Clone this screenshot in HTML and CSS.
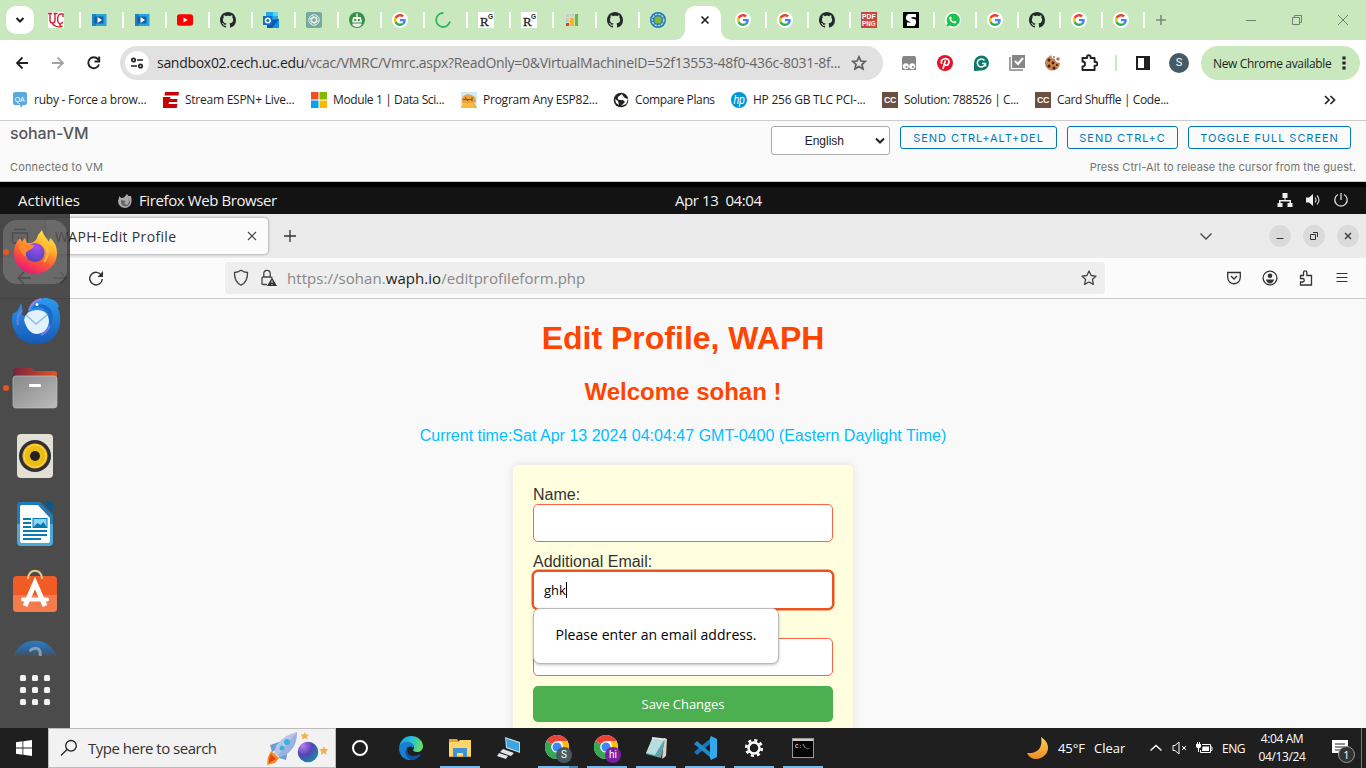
FILE: index.html
```html
<!DOCTYPE html>
<html lang="en">
<head>
<meta charset="utf-8">
<title>sohan-VM</title>
<link rel="stylesheet" href="styles.css">
</head>
<body>
<svg class="defs" width="0" height="0" aria-hidden="true">
<defs>
<linearGradient id="ffFlame" x1=".8" y1="0" x2=".3" y2="1"><stop offset="0" stop-color="#fff04a"/><stop offset=".35" stop-color="#ffb02e"/><stop offset=".65" stop-color="#ff5a36"/><stop offset="1" stop-color="#e9137c"/></linearGradient>
<radialGradient id="ffGlobe" cx=".6" cy=".2" r=".9"><stop offset="0" stop-color="#a54ff0"/><stop offset="1" stop-color="#4544b8"/></radialGradient>
<linearGradient id="bird" x1=".5" y1="0" x2=".5" y2="1"><stop offset="0" stop-color="#2b9aef"/><stop offset="1" stop-color="#1559b4"/></linearGradient>
<linearGradient id="folderBack"><stop offset="0" stop-color="#762341"/><stop offset="1" stop-color="#e95420"/></linearGradient>
<linearGradient id="grey" x1="0" y1="0" x2="1" y2="1"><stop offset="0" stop-color="#888"/><stop offset="1" stop-color="#bbb"/></linearGradient>
<linearGradient id="edgeG" x1="0" y1=".3" x2="1" y2=".5"><stop offset="0" stop-color="#1b9de2"/><stop offset=".5" stop-color="#2bc0d8"/><stop offset="1" stop-color="#6ade5c"/></linearGradient>
<linearGradient id="moonG" x1="0" y1="0" x2="0" y2="1"><stop offset="0" stop-color="#ffd35a"/><stop offset="1" stop-color="#f08a24"/></linearGradient>
<linearGradient id="helpG" x1="0" y1="0" x2="0" y2="1"><stop offset="0" stop-color="#2a7fc4"/><stop offset=".5" stop-color="#2b68a0"/><stop offset="1" stop-color="#4a5056"/></linearGradient>
<radialGradient id="planetG" cx=".25" cy=".2" r=".9"><stop offset="0" stop-color="#bb7cf0"/><stop offset=".5" stop-color="#5046b4"/><stop offset="1" stop-color="#158ea6"/></radialGradient>
<symbol id="github" viewBox="0 0 16 16"><path fill="#24292f" d="M8 0C3.58 0 0 3.58 0 8c0 3.54 2.29 6.53 5.47 7.59.4.07.55-.17.55-.38 0-.19-.01-.82-.01-1.49-2.01.37-2.53-.49-2.69-.94-.09-.23-.48-.94-.82-1.13-.28-.15-.68-.52-.01-.53.63-.01 1.08.58 1.23.82.72 1.21 1.87.87 2.33.66.07-.52.28-.87.51-1.07-1.78-.2-3.64-.89-3.64-3.95 0-.87.31-1.59.82-2.15-.08-.2-.36-1.02.08-2.12 0 0 .67-.21 2.2.82.64-.18 1.32-.27 2-.27s1.36.09 2 .27c1.53-1.04 2.2-.82 2.2-.82.44 1.1.16 1.92.08 2.12.51.56.82 1.27.82 2.15 0 3.07-1.87 3.75-3.65 3.95.29.25.54.73.54 1.48 0 1.07-.01 1.93-.01 2.2 0 .21.15.46.55.38A8.01 8.01 0 0 0 16 8c0-4.42-3.58-8-8-8z"/></symbol>
<symbol id="google" viewBox="0 0 64 64"><circle cx="32" cy="32" r="32" fill="#fff"/><g transform="translate(8 8)"><path fill="#EA4335" d="M24 9.5c3.54 0 6.71 1.22 9.21 3.6l6.85-6.85C35.9 2.38 30.47 0 24 0 14.62 0 6.51 5.38 2.56 13.22l7.98 6.19C12.43 13.72 17.74 9.5 24 9.5z"/><path fill="#4285F4" d="M46.98 24.55c0-1.57-.15-3.09-.38-4.55H24v9.02h12.94c-.58 2.96-2.26 5.48-4.78 7.18l7.73 6c4.51-4.18 7.09-10.36 7.09-17.65z"/><path fill="#FBBC05" d="M10.53 28.59c-.48-1.45-.76-2.99-.76-4.59s.27-3.14.76-4.59l-7.98-6.19C.92 16.46 0 20.12 0 24c0 3.88.92 7.54 2.56 10.78l7.97-6.19z"/><path fill="#34A853" d="M24 48c6.48 0 11.93-2.13 15.89-5.81l-7.73-6c-2.15 1.45-4.92 2.3-8.16 2.3-6.26 0-11.57-4.22-13.47-9.91l-7.98 6.19C6.51 42.62 14.62 48 24 48z"/></g></symbol>
<symbol id="video" viewBox="0 0 16 16"><path fill="#1b82c4" d="M1 2h5v12H1z"/><path fill="#2aa5dc" d="M5 2h10.500v12H5z"/><path fill="#0f5fa8" d="M3.500 4.500h9v7h-9z"/><path fill="#fff" d="M6.500 5l4.500 3-4.500 3z"/></symbol>
<symbol id="rgate" viewBox="0 0 16 16"><path fill="#fff" d="M0 0h16v16H0z"/><text x="2" y="14" font-size="13" font-family="Liberation Serif, serif" fill="#222" stroke="#222" stroke-width=".3">R</text><text x="10" y="7" font-size="6.500" font-weight="700" font-family="Liberation Sans, sans-serif" fill="#222">G</text></symbol>
<symbol id="chrome" viewBox="0 0 26 26"><circle cx="12" cy="12" r="12" fill="#fff"/><path fill="#ea4335" d="M12 12L1.600 6A12 12 0 0 1 22.400 6H12z"/><path fill="#34a853" d="M1.600 6A12 12 0 0 0 12 24l5-9z"/><path fill="#fbbc04" d="M22.400 6A12 12 0 0 1 12 24l6-10-1-8z"/><circle cx="12" cy="12" r="5.800" fill="#fff"/><circle cx="12" cy="12" r="4.500" fill="#4285f4"/></symbol>
<symbol id="cc" viewBox="0 0 16 16"><path fill="#6b503f" d="M0 0h16v16H0z"/><text x="8" y="11" text-anchor="middle" font-size="8.500" font-weight="700" font-family="Liberation Sans, sans-serif" fill="#fff" textLength="12" lengthAdjust="spacingAndGlyphs">CC</text></symbol>
<symbol id="firefox" viewBox="0 0 44 44"><path fill="url(#ffFlame)" d="M22 43.500C10 43.500 1 35 1 23.500 1 16 4 11 7 8l2 4 3-4 2 5h4c4-1 6-4 7-8l4-5c1 5 5 8 7 12l1-4c5 4 7 9 7 15 0 12-10 20.500-22 20.500z"/><circle cx="22" cy="22.500" r="9.500" fill="url(#ffGlobe)"/><path fill="#ff8a2c" d="M5 17c4-5 8-3 16-2 1 3-4 4-6 6-2 1-3 3-2 6-4-2-5-6-8-10z"/><path d="M30 12q9 10 1 20" fill="none" stroke="#ffc13b" stroke-width="2"/></symbol>
</defs>
</svg>

<header class="tabstrip">
  <div class="tab-search"><svg width="10" height="10" viewBox="0 0 10 10"><path d="M1.500 3l3.500 3.500L8.500 3" fill="none" stroke="#1f1f1f" stroke-width="2"/></svg></div>
  <div class="tabs">
    <div class="tab"><svg viewBox="0 0 16 16"><path fill="#fff" d="M0 0h16v16H0z"/><path d="M0 1.500h4M2 1.500V8c0 4 5 4 5 0V1.500M5.500 1.500h4M15 5V2h-1.500C9 1 8 12 12.500 12l2.500-2M14.500 14C10 16 6 14 4 11M12 12v3" fill="none" stroke="#d8202f" stroke-width="1.400"/></svg></div>
    <div class="tab"><svg><use href="#video"/></svg></div>
    <div class="tab"><svg><use href="#video"/></svg></div>
    <div class="tab"><svg viewBox="0 0 16 16"><rect y="2.300" width="16" height="11.400" rx="2.500" fill="red"/><path fill="#fff" d="M6.500 5.500l4.200 2.500-4.200 2.500z"/></svg></div>
    <div class="tab"><svg><use href="#github"/></svg></div>
    <div class="tab"><svg viewBox="0 0 16 16"><path fill="#28a8ea" d="M3 0h12v7H3z"/><path fill="#1490df" d="M4 7h12v9H4z"/><path fill="#50d9ff" d="M10 0h5v4h-5z"/><path fill="#0a58a8" d="M4 9l12-2-7 9H4z"/><path fill="#0f6fc6" d="M0 4h9.500v9H0z"/><circle cx="4.800" cy="8.500" r="2.300" fill="none" stroke="#fff" stroke-width="1.500"/></svg></div>
    <div class="tab"><svg viewBox="0 0 16 16"><rect width="16" height="16" rx="2" fill="#75a99c"/><g fill="none" stroke="#e8f3ef" stroke-width=".9"><circle cx="8" cy="8" r="5.300"/><path id="knot" d="M6 3.500l4.200 2.500v4.500"/><use href="#knot" transform="rotate(60 8 8)"/><use href="#knot" transform="rotate(120 8 8)"/><use href="#knot" transform="rotate(180 8 8)"/><use href="#knot" transform="rotate(240 8 8)"/><use href="#knot" transform="rotate(300 8 8)"/></g></svg></div>
    <div class="tab"><svg viewBox="0 0 16 16"><circle cx="8" cy="8" r="8" fill="#3b8e4c"/><path fill="#f3f5e8" d="M7.300 1.500h1.400V5h3l1 3v2.500H3.300V8l1-3h3zM3.500 11.500h9v1.500c-2 2.500-7 2.500-9 0z"/><path fill="#3b8e4c" d="M5.300 7h1.900v2H5.300zM8.900 7h1.900v2H8.900z"/></svg></div>
    <div class="tab"><svg><use href="#google"/></svg></div>
    <div class="tab"><svg viewBox="0 0 16 16"><path d="M8.500 1A7 7 0 1 0 15 9.500" fill="none" stroke="#34b455" stroke-width="1.800"/></svg></div>
    <div class="tab"><svg><use href="#rgate"/></svg></div>
    <div class="tab"><svg><use href="#rgate"/></svg></div>
    <div class="tab"><svg viewBox="0 0 16 16"><path fill="#c9c9c9" d="M2 2h3v3H2zM6 2h4v2.500H6zM2 6h3v4H2z"/><path fill="#dd4038" d="M2 11h3v3H2z"/><path fill="#f5b52a" d="M6 6h4v8H6z"/><path fill="#67b54b" d="M11 2h3v12h-3z"/></svg></div>
    <div class="tab"><svg><use href="#github"/></svg></div>
    <div class="tab"><svg viewBox="0 0 16 16"><circle cx="8" cy="8" r="8" fill="#2675ad"/><circle cx="8" cy="8" r="5.700" fill="none" stroke="#9ad4ee" stroke-width="1.600" stroke-dasharray="2.500 .8"/><rect x="4.500" y="4.500" width="7" height="7" rx="2.500" fill="#82b93c"/></svg></div>
  </div>
  <div class="tab-active"><svg width="10" height="10" viewBox="0 0 10 10"><path d="M1.500 1.500l7 7m0-7l-7 7" stroke="#222" stroke-width="1.700"/></svg></div>
  <div class="tabs tabs-after">
    <div class="tab"><svg><use href="#google"/></svg></div>
    <div class="tab"><svg><use href="#google"/></svg></div>
    <div class="tab"><svg><use href="#github"/></svg></div>
    <div class="tab"><svg viewBox="0 0 16 16"><path fill="#cf4539" d="M0 0h16v16H0z"/><g fill="#fff" font-family="Liberation Sans, sans-serif" font-weight="700" font-size="7.500"><text x="1" y="7.300" textLength="13.500" lengthAdjust="spacingAndGlyphs">PDF</text><text x="1" y="14.300" textLength="13.500" lengthAdjust="spacingAndGlyphs">PNG</text></g></svg></div>
    <div class="tab"><svg viewBox="0 0 16 16"><path d="M0 0h16v16H0z"/><path fill="#fff" d="M5 2h8v3.500L10 5 7.500 6l5 1.500q1.500 3-1 6.500H4v-3.500h4L3.500 8Q1.500 5 5 2z"/></svg></div>
    <div class="tab"><svg viewBox="0 0 16 16"><circle cx="8" cy="8" r="8" fill="#fff"/><path fill="#1bc34c" d="M1.500 14.500l1-3.500A6.500 6.500 0 1 1 5 13.600z"/><path fill="#fff" d="M5.700 4.300l1 2-.6 1c.7 1.200 1.300 1.800 2.600 2.400l.9-.9 1.900 1c0 3-6 1.500-7.200-3-.2-1 .4-2.200 1.400-2.500z"/></svg></div>
    <div class="tab"><svg><use href="#google"/></svg></div>
    <div class="tab"><svg><use href="#github"/></svg></div>
    <div class="tab"><svg><use href="#google"/></svg></div>
    <div class="tab"><svg><use href="#google"/></svg></div>
  </div>
  <svg class="new-tab" width="12" height="12" viewBox="0 0 12 12"><path d="M6 1v10M1 6h10" stroke="#7a8a74" stroke-width="1.600"/></svg>
  <div class="win-controls">
    <svg viewBox="0 0 12 12"><path d="M1 6.500h10" stroke="#74806f"/></svg>
    <svg viewBox="0 0 12 12"><path d="M1.500 3.500h7v7h-7zM3.500 3.500v-2h7v7h-2" fill="none" stroke="#74806f"/></svg>
    <svg viewBox="0 0 12 12"><path d="M1 1l10 10m0-10L1 11" stroke="#74806f"/></svg>
  </div>
</header>

<nav class="toolbar">
  <div class="nav-btns">
    <svg viewBox="0 0 16 16"><path d="M14 8H3m5.500-5.500L3 8l5.500 5.500" fill="none" stroke="#222" stroke-width="1.800"/></svg>
    <svg viewBox="0 0 16 16"><path d="M2 8h11M7.500 2.500L13 8l-5.500 5.500" fill="none" stroke="#a3a3a3" stroke-width="1.800"/></svg>
    <svg viewBox="0 0 16 16"><path d="M13 9.500A5.500 5.500 0 1 1 12 4.200l1 1.300M13.200 1.500v5H8.500" fill="none" stroke="#222" stroke-width="1.900"/></svg>
  </div>
  <div class="omnibox">
    <span class="site-info"><svg width="14" height="14" viewBox="0 0 14 14" fill="none" stroke="#222" stroke-width="1.700"><circle cx="3.500" cy="4" r="1.700"/><path d="M7 4h6M1 10h6"/><circle cx="10.500" cy="10" r="1.700"/></svg></span>
    <span class="url"><b>sandbox02.cech.uc.edu</b>/vcac/VMRC/Vmrc.aspx?ReadOnly=0&amp;VirtualMachineID=52f13553-48f0-436c-8031-8f...</span>
    <svg class="star" width="16" height="16" viewBox="0 0 16 16"><path d="M8 1.800l1.900 4.200 4.500.4-3.400 3 1 4.500L8 11.500l-4 2.400 1-4.500-3.400-3 4.500-.4z" fill="none" stroke="#5e5e5e" stroke-width="1.700"/></svg>
  </div>
  <div class="extensions">
    <svg viewBox="0 0 16 16"><path fill="#868686" d="M1 3q0-2 2-2h10q2 0 2 2v12H1z"/><circle cx="4.800" cy="11.300" r="3" fill="#fff"/><circle cx="11.200" cy="11.300" r="3" fill="#fff"/><circle cx="5.500" cy="12" r="1" fill="#868686"/><circle cx="11.900" cy="12" r="1" fill="#868686"/></svg>
    <svg viewBox="0 0 16 16"><circle cx="8" cy="8" r="8" fill="#e31429"/><path d="M4.700 8.800C2 3 12.500 1.800 12 7c-.4 4-4 4-4 2M8.300 5.500L6 14" fill="none" stroke="#fff" stroke-width="1.700"/></svg>
    <svg viewBox="0 0 16 16"><path fill="#0b7966" d="M1 16V8A7.500 7.500 0 1 1 8.500 15.500z"/><path d="M11.500 5.500A4 4 0 1 0 12 9.500M9 8.500h3.500v3" fill="none" stroke="#fff" stroke-width="1.500"/></svg>
    <svg viewBox="0 0 16 16"><path d="M1 2v13h13" fill="none" stroke="#a2a2a2" stroke-width="2"/><path fill="#868686" d="M3 0h13v13H3z"/><path d="M6 6l3 3 5-6" stroke="#fff" stroke-width="2" fill="none"/></svg>
    <svg viewBox="0 0 16 16"><path fill="#c5824e" d="M6 0l1 3 3 1 1 3 4 1A7.500 7.500 0 1 1 2 3z"/><circle cx="13" cy="4" r="1.800" fill="#b7764a"/><g fill="#3d211c"><circle cx="4" cy="5" r="1.500"/><circle cx="8" cy="8" r="1.400"/><circle cx="4" cy="11" r="1.500"/><circle cx="9" cy="13" r="1.500"/><circle cx="12" cy="10" r="1.100"/><circle cx="9" cy="2" r=".8"/></g></svg>
    <svg class="puzzle" viewBox="0 0 18 18"><path d="M2.500 4H7V3a1.800 1.800 0 0 1 3.600 0v1h4v4h1a1.800 1.800 0 0 1 0 3.600h-1V16H2.500v-3.500a2.500 2.500 0 0 0 0-5z" fill="none" stroke="#222" stroke-width="1.900" stroke-linejoin="round"/></svg>
  </div>
  <i class="divider"></i>
  <svg class="side-panel" width="16" height="16" viewBox="0 0 16 16"><path fill="#1f1f1f" d="M1 1h14v14H1zM3 3v10h6V3z" fill-rule="evenodd"/></svg>
  <span class="avatar">S</span>
  <div class="update"><span>New Chrome available</span><svg width="4" height="14" viewBox="0 0 4 14"><path fill="#222" d="M.4.500h3.200v3H.4zM.4 5.500h3.200v3H.4zM.4 10.500h3.200v3H.4z"/></svg></div>
</nav>

<div class="bookmarks">
  <div class="bm w151"><svg viewBox="0 0 16 16"><path fill="#58aade" d="M3 0h10q2 0 2 2v9q0 2-2 2h-2l-2 3-1-3H3q-2 0-2-2V2q0-2 2-2z"/><text x="2.800" y="9.500" font-size="7" font-family="Liberation Sans, sans-serif" fill="#fff">QA</text></svg><span>ruby - Force a brow...</span></div>
  <div class="bm w148 tight"><svg viewBox="0 0 16 16"><path fill="#cb0000" d="M2 0h14l-.6 3.500H1.500zM1.200 5h6.300L7 7h7.500l-.4 3H6l-.4 2h8.800l-.6 4H0V5z"/></svg><span>Stream ESPN+ Live...</span></div>
  <div class="bm w150 tight"><svg viewBox="0 0 16 16"><path fill="#f25022" d="M0 0h7.500v7.500H0z"/><path fill="#7fba00" d="M8.500 0H16v7.500H8.500z"/><path fill="#00a4ef" d="M0 8.500h7.500V16H0z"/><path fill="#ffb900" d="M8.500 8.500H16V16H8.500z"/></svg><span>Module 1 | Data Sci...</span></div>
  <div class="bm w152"><svg viewBox="0 0 16 16"><path fill="#cdeaf8" d="M0 0h16v16H0z"/><path fill="#e8a33c" d="M1 6q5-7 13-1l1 5-2 1 3 5H0l2-4-1-2z"/><path fill="#f8b93c" d="M2 11h10l3 5H0z"/><path d="M2 7.500h9M4 5l3 4M11 5v4" stroke="#80512c" stroke-width="1"/></svg><span>Program Any ESP82...</span></div>
  <div class="bm w118 tight"><svg viewBox="0 0 16 16"><circle cx="8" cy="8" r="7.300" fill="#202124"/><path fill="#fff" d="M9 2L5 5q-1 3 2 3h3l2 2-4 4 5-2 2-5-3-1-2-2zM2 7l3 2 1 4-3-2z"/></svg><span>Compare Plans</span></div>
  <div class="bm w151"><svg viewBox="0 0 16 16"><circle cx="8" cy="8" r="8" fill="#0096d6"/><text x="2.500" y="11.500" font-size="12" font-style="italic" font-family="Liberation Sans, sans-serif" fill="#fff" textLength="11" lengthAdjust="spacingAndGlyphs">hp</text></svg><span>HP 256 GB TLC PCI-...</span></div>
  <div class="bm w153 tight"><svg><use href="#cc"/></svg><span>Solution: 788526 | C...</span></div>
  <div class="bm tight"><svg><use href="#cc"/></svg><span>Card Shuffle | Code...</span></div>
  <svg class="more" width="12" height="10" viewBox="0 0 12 10"><path d="M1 1l4 4-4 4M6.500 1l4 4-4 4" fill="none" stroke="#222" stroke-width="1.700"/></svg>
</div>

<section class="vm-head">
  <div class="vm-left"><h3>sohan-VM</h3><p>Connected to VM</p></div>
  <div class="vm-right">
    <div class="vm-actions">
      <div class="select"><span>English</span><svg width="10" height="8" viewBox="0 0 10 8"><path d="M1 1.500l4 4 4-4" fill="none" stroke="#222" stroke-width="2"/></svg></div>
      <div class="vm-btn b1">SEND CTRL+ALT+DEL</div>
      <div class="vm-btn b2">SEND CTRL+C</div>
      <div class="vm-btn b3">TOGGLE FULL SCREEN</div>
    </div>
    <p><span>Press Ctrl-Alt to release the cursor from the guest.</span></p>
  </div>
</section>

<main class="guest">
  <div class="gnome-bar">
    <span class="g-act">Activities</span>
    <svg class="g-ff" width="16" height="16" viewBox="0 0 16 16"><path fill="#aaa" d="M8 15A7 7 0 0 1 1 8l1.500-5 1.500 2 3-.5 3-3.500 1.500 2L14 3c2 7-1 12-6 12z"/><path fill="#666" d="M4 7l5 1-2 2 3 2 2-3-1-4 2 4c0 4-7 7-9 1z"/></svg>
    <span class="g-app">Firefox Web Browser</span>
    <span class="g-clock">Apr 13&nbsp; 04:04</span>
    <div class="g-tray">
      <svg viewBox="0 0 16 16"><path fill="#eee" d="M5.500 1h5v5h-2v2H14v3h1.500v4h-5v-4h2V9.500h-9V11h2v4H.5v-4H2V8h5.500V6h-2z"/></svg>
      <svg viewBox="0 0 16 16"><path fill="#eee" d="M1 5.500h3L8 2v12l-4-3.500H1z"/><path d="M10 5.500q2 2.500 0 5M12 3.500q4 4.500 0 9" fill="none" stroke="#ccc" stroke-width="1.200"/></svg>
      <svg viewBox="0 0 16 16"><path d="M5 2.500a6.200 6.200 0 1 0 6 0M8 1v7" fill="none" stroke="#ddd" stroke-width="1.300"/></svg>
    </div>
  </div>

  <div class="ff-tabs">
    <svg class="ff-view" width="18" height="18" viewBox="0 0 18 18"><path d="M1.500 6h15v9q0 1-1 1h-13q-1 0-1-1zM3 2.500h12M6.500 10L9 12.500l2.500-2.500" fill="none" stroke="#444" stroke-width="1.500"/></svg>
    <div class="ff-tab"><span>WAPH-Edit Profile</span><svg width="10" height="10" viewBox="0 0 10 10"><path d="M1 1l8 8m0-8L1 9" stroke="#444" stroke-width="1.100"/></svg></div>
    <svg class="ff-plus" width="12" height="12" viewBox="0 0 12 12"><path d="M6 0v12M0 6h12" stroke="#333" stroke-width="1.300"/></svg>
    <svg class="ff-chev" width="14" height="9" viewBox="0 0 14 9"><path d="M1.500 1.500L7 7l5.500-5.500" fill="none" stroke="#444" stroke-width="1.300"/></svg>
    <div class="ff-win">
      <span><svg viewBox="0 0 10 10"><path d="M1.500 7.500h7" stroke="#333"/></svg></span>
      <span><svg viewBox="0 0 10 10"><path d="M1.500 3.500h5v5h-5zM4 1.500h4.500V6" fill="none" stroke="#333"/></svg></span>
      <span><svg viewBox="0 0 10 10"><path d="M2 2l6 6m0-6L2 8" stroke="#333" stroke-width="1.300"/></svg></span>
    </div>
  </div>

  <div class="ff-nav">
    <svg class="ff-arrow" width="16" height="14" viewBox="0 0 16 14"><path d="M15 7H2m6-6L2 7l6 6" fill="none" stroke="#444" stroke-width="1.300"/></svg>
    <svg class="ff-arrow fwd" width="16" height="14" viewBox="0 0 16 14"><path d="M1 7h13M8 1l6 6-6 6" fill="none" stroke="#999" stroke-width="1.300"/></svg>
    <svg class="ff-reload" width="16" height="16" viewBox="0 0 16 16"><path d="M13.500 5.500A6.300 6.300 0 1 0 14.300 9" fill="none" stroke="#333" stroke-width="1.400"/><path fill="#333" d="M15 1v6H9.500z"/></svg>
    <div class="ff-url">
      <svg width="16" height="18" viewBox="0 0 16 18"><path d="M8 1.200q3 2 6.500 2.300c.3 6-1.500 10-6.500 12.800C3 13.500 1.200 9.500 1.500 3.500Q5 3.200 8 1.200z" fill="none" stroke="#444" stroke-width="1.300"/></svg>
      <svg width="18" height="18" viewBox="0 0 18 18"><path d="M3.800 8V4.500a3.200 3.200 0 0 1 6.400 0V8M7 15.500H3.200q-1.200 0-1.200-1V9q0-1 1.200-1h7.600q1.200 0 1.200 1" fill="none" stroke="#444" stroke-width="1.300"/><path fill="#333" d="M12 8.500l5 8.500H7z"/><path d="M12 11.500V14m0 1v1" stroke="#eee"/></svg>
      <span>https://sohan.<b>waph.io</b>/editprofileform.php</span>
      <svg class="ff-star" width="16" height="16" viewBox="0 0 16 16"><path d="M8 1l2.100 4.500 4.900.6-3.600 3.300 1 5L8 12l-4.400 2.400 1-5L1 6.100l4.900-.6z" fill="none" stroke="#444" stroke-width="1.300" stroke-linejoin="round"/></svg>
    </div>
    <div class="ff-tools">
      <svg viewBox="0 0 16 16"><path d="M1.700 2.500h12.600V7c0 9-12.600 9-12.600 0zM5 6l3 3 3-3" fill="none" stroke="#333" stroke-width="1.300"/></svg>
      <svg viewBox="0 0 16 16"><circle cx="8" cy="8" r="6.900" fill="none" stroke="#333" stroke-width="1.300"/><circle cx="8" cy="5.800" r="2.300" fill="#333"/><path fill="#333" d="M3.800 9.500h8.400q-1.500 4-4.200 4t-4.200-4z"/></svg>
      <svg viewBox="0 0 16 16"><path d="M2.500 5.500h3V2.500a1.700 1.700 0 0 1 3.400 0v3h4.600V15h-11v-3h2a1.600 1.600 0 0 0 0-3.500h-2z" fill="none" stroke="#333" stroke-width="1.300"/></svg>
      <svg viewBox="0 0 16 16"><path d="M2.500 3.500h11M2.500 7.500h11M2.500 11.500h11" stroke="#333" stroke-width="1.200"/></svg>
    </div>
  </div>

  <div class="page">
    <h1>Edit Profile, WAPH</h1>
    <h2>Welcome sohan !</h2>
    <p class="time">Current time:Sat Apr 13 2024 04:04:47 GMT-0400 (Eastern Daylight Time)</p>
    <div class="card">
      <label>Name:</label>
      <div class="field"></div>
      <label>Additional Email:</label>
      <div class="field focused"><span>ghk</span><i></i><div class="hint"><span>Please enter an email address.</span></div></div>
      <label>&nbsp;</label>
      <div class="field"></div>
      <div class="save">Save Changes</div>
    </div>
  </div>

  <aside class="dock">
    <div class="launch on sel"><svg width="44" height="44"><use href="#firefox"/></svg></div>
    <div class="launch bird"><svg width="50" height="48" viewBox="0 0 50 48"><path fill="url(#bird)" d="M2 16q5 0 8-10 2 5 1 12l6 3q-1-9 4-14Q27 0 36 1q9 1 12 8l-1 2q4 10 1 20-5 16-22 16Q10 47 4 35-1 25 2 16z"/><path d="M18 13q3-9 12-11" fill="none" stroke="#9c7ff0" stroke-width="1.800"/><path d="M7 28q-2-9 4-15M30 38q7-3 9-10" fill="none" stroke="#6f7ae8" stroke-width="2"/><path fill="#e2f2fd" d="M13 23q2-10 13-10t12 11q-1 12-12 13-9 0-13-14z"/><path d="M15 18l10 9 11-9" fill="none" stroke="#8fbbe2" stroke-width="1.500"/><path fill="#1a68c8" d="M21 12q10-6 17 6l1 12q5-9 1-17Q34 5 24 8z"/><circle cx="26" cy="7.500" r="1.500" fill="#fff"/></svg></div>
    <div class="launch on"><svg width="46" height="44" viewBox="0 0 46 44"><path fill="url(#folderBack)" d="M1 5q0-3 3-3h15l4 3h19q3 0 3 3v14H1z"/><rect x="1" y="10" width="44" height="32" rx="3" fill="url(#grey)" stroke="#c0c0c0" stroke-width=".7"/><rect x="17" y="18" width="12" height="3" rx="1" fill="#fff"/></svg></div>
    <div class="launch"><svg width="38" height="46" viewBox="0 0 38 46"><rect x="1" y="1" width="36" height="44" rx="4" fill="#e4dfd4"/><circle cx="19" cy="23" r="16" fill="#303038"/><circle cx="19" cy="23" r="12.500" fill="#edbc15"/><circle cx="19" cy="23" r="11" fill="none" stroke="#ffd861"/><circle cx="19" cy="23" r="5" fill="#222"/></svg></div>
    <div class="launch"><svg width="40" height="46" viewBox="0 0 40 46"><path fill="#207cb9" d="M5 1h20l13 13v27q0 4-4 4H6q-4 0-4-4V5q0-4 3-4z"/><path fill="#4aa9da" d="M2 23h36v18q0 4-4 4H6q-4 0-4-4z"/><path fill="#fff" d="M5 6q0-2 2-2h16l12 13v23q0 2-2 2H7q-2 0-2-2z"/><path fill="#0c5785" d="M28 1h10v11z"/><path d="M8 18h8m-8 4h8m-8 4h8m-8 4h24M8 34h24M8 38h18" stroke="#087bb3" stroke-width="2"/><rect x="18" y="17.500" width="14" height="9" fill="#8ed5f5" stroke="#087bb3"/><path fill="#087bb3" d="M18.500 26l4-4 3 2 3-3 3 5z"/></svg></div>
    <div class="launch store"><svg width="46" height="44" viewBox="0 0 46 44"><rect x="1" y="7" width="44" height="36" rx="4" fill="#f15b26"/><path fill="#f37b4c" d="M1 26h44v13q0 4-4 4H5q-4 0-4-4z"/><path d="M16 10c0-11 14-11 14 0" fill="none" stroke="#e6c991" stroke-width="2"/><path d="M13 37l10-23 10 23" fill="none" stroke="#fff" stroke-width="5"/><path d="M11 30.500h24" stroke="#fff" stroke-width="4" stroke-linecap="round"/></svg></div>
    <div class="launch cut"><svg width="44" height="19" viewBox="0 0 44 19"><path d="M0 19A23.500 23.500 0 0 1 44 19z" fill="url(#helpG)"/><path d="M16.500 14q5-4.500 9.500-1.500 2 3 1 6.500" fill="none" stroke="#899dab" stroke-width="3"/></svg></div>
    <div class="apps"><i></i><i></i><i></i><i></i><i></i><i></i><i></i><i></i><i></i></div>
  </aside>
</main>

<footer class="taskbar">
  <div class="start"><svg width="16" height="16" viewBox="0 0 16 16"><path fill="#fff" d="M0 2.300l6.500-1V7.600H0zM7.300 1.200L16 0v7.600H7.300zM0 8.400h6.500v6.300L0 13.800zM7.300 8.400H16V16l-8.700-1.200z"/></svg></div>
  <div class="search">
    <svg width="18" height="18" viewBox="0 0 18 18"><circle cx="11" cy="6.800" r="5.300" fill="none" stroke="#222" stroke-width="1.300"/><path d="M7 10.500L1 16.500" stroke="#222" stroke-width="1.300"/></svg>
    <span>Type here to search</span>
    <svg class="rocket" width="62" height="34" viewBox="0 0 62 34"><path fill="#f48b20" d="M5 20l-3 6-1 8 8-2 4-5z"/><path fill="#e5431d" d="M5 23l-2 5 0 4 7-4z"/><path fill="#6e9dd6" d="M13 11L4 14l2 7 7-4zM22 18l-2 11-7-2-1-7z"/><path fill="#b9c6e7" d="M31 1Q17 4 10 15l-2 8 6 3c10-4 17-12 17-25z"/><path fill="#9db1de" d="M31 1q0 20-17 25l-2-2z"/><circle cx="21" cy="11" r="3" fill="#37b2dc"/><circle cx="16" cy="17" r="2.500" fill="#37b2dc"/><circle cx="42" cy="21" r="10.300" fill="url(#planetG)"/><path fill="#f6ae4b" d="M39 1l1 2.500h3l-2 2 .5 3-2.500-1.500L36 8.500l.5-3-2-2h3zM58 15l1 3h3l-2 3 .5 3L58 22l-3 2 .5-3-2-3h3z"/></svg>
  </div>
  <div class="task"><svg width="18" height="18" viewBox="0 0 18 18"><circle cx="9" cy="9" r="7" fill="none" stroke="#fff" stroke-width="2"/></svg></div>
  <div class="task edge"><svg width="24" height="24" viewBox="0 0 24 24"><path fill="url(#edgeG)" d="M0 12C1 4 6 0 12 0c7 0 12 5 12 10 0 4-3 6-6 6-2 0-4-1-4-2 2-2 1-6-3-7C6 6 1 8 0 12z"/><path fill="#1a7fd0" d="M0 12c1-5 6-7 10-6 5 1 5 4 4 6-1-2-4-2-6 0-3 4 0 11 5 12C5 25 0 19 0 12z"/><path fill="#0f54a0" d="M9 11c-2 4 0 9 5 9 3 0 6-1 8-2-2 4-6 6-9 6-6-1-9-9-4-13z"/></svg></div>
  <div class="task run"><svg width="22" height="20" viewBox="0 0 22 20"><path fill="#e6a321" d="M0 1h8l2 3h12v15H0z"/><path fill="#ffd66a" d="M0 4h9l2-2h11v16H0z"/><path fill="#3e93d5" d="M4 10h14v9h-4v-4H8v4H4z"/></svg></div>
  <div class="task"><svg width="24" height="22" viewBox="0 0 24 22"><path fill="#b8dcee" d="M8 0l15 5v11L9 11z"/><path fill="#3fa4de" d="M9 1.500l13 4.500v8.500L10 10z"/><path fill="#dce5e8" d="M6 12l11 4-3 3L3 15zM2 16l9 3-2 3-9-3z"/></svg></div>
  <div class="task run stacked"><svg width="26" height="26"><use href="#chrome"/></svg><b class="badge slate">S</b></div>
  <div class="task run"><svg width="26" height="26"><use href="#chrome"/></svg><b class="badge violet">hi</b></div>
  <div class="task run"><svg width="24" height="24" viewBox="0 0 24 24"><path fill="#d8d2c0" d="M20 2l3 1-1 17-4 3z"/><path fill="#5fa3ad" d="M8 3l13 1-4 18-15-4z"/><path fill="#b8dde0" d="M8 3l12 1-9 15-9-2z"/><path d="M8 2l13 1.500" stroke="#e8e8e8" stroke-width="2"/></svg></div>
  <div class="task run"><svg width="24" height="24" viewBox="0 0 24 24"><path d="M18 2L1 16l3 3L18 7z" fill="#1379bd"/><path d="M18 22L1 8l3-3 14 12z" fill="#208acb"/><path fill="#35a7ec" d="M18 0l6 3v18l-6 3-1-2V2z"/></svg></div>
  <div class="task run"><svg width="20" height="20" viewBox="0 0 20 20"><circle cx="10" cy="10" r="5.500" fill="none" stroke="#fff" stroke-width="2.500"/><circle cx="10" cy="10" r="7.800" fill="none" stroke="#fff" stroke-width="2.600" stroke-dasharray="3.063 3.063"/></svg></div>
  <div class="task run"><svg width="22" height="20" viewBox="0 0 22 20"><rect x=".5" y=".5" width="21" height="19" fill="#050505" stroke="#999"/><path d="M1 2h20" stroke="#ccc" stroke-width="2"/><text x="3" y="10" font-size="6" font-family="Liberation Mono, monospace" fill="#fff">C:\_</text></svg></div>

  <div class="tray">
    <svg class="moon" width="22" height="22" viewBox="0 0 22 22"><path fill="url(#moonG)" d="M14 0c13 8 6 22-5 22-4 0-7-2-9-6 11 1 16-6 14-16z"/></svg>
    <span class="temp">45°F</span><span class="cond">Clear</span>
    <svg class="up" width="14" height="8" viewBox="0 0 14 8"><path d="M1.500 6.500L7 1.500l5.500 5" fill="none" stroke="#fff" stroke-width="1.300"/></svg>
    <svg class="mute" width="16" height="14" viewBox="0 0 16 14"><path d="M1 4.500h2L7 1v12L3 9.500H1zM10 5l4 4m0-4l-4 4" fill="none" stroke="#fff"/></svg>
    <svg class="batt" width="17" height="13" viewBox="0 0 17 13"><path d="M6 2.500h8.500v8h-10V8M15 5h1v3.500h-1" fill="none" stroke="#fff"/><path fill="#fff" d="M6.500 4.500H13V9H6zM1 0h1v2h1V0h1v2h1v3L3 6.500V10H2V6.500L0 5V2h1z"/></svg>
    <span class="lang">ENG</span>
    <div class="clock"><span>4:04 AM</span><span>04/13/24</span></div>
    <div class="notif"><svg width="16" height="16" viewBox="0 0 16 16"><path fill="#fff" d="M0 0h16v13h-7l-3 3v-3H0z"/><path d="M3 4h10M3 7h10M3 10h5" stroke="#222"/></svg><b>1</b></div>
  </div>
</footer>
</body>
</html>
```
FILE: styles.css
```css
* { box-sizing: border-box; }
body { margin: 0; width: 1366px; height: 768px; overflow: hidden; background: #fff; font-family: "Open Sans", "Noto Sans", sans-serif; color: #1f1f1f; }
svg { display: block; flex: none; }
h1, h2, h3, p { margin: 0; }
span, .vm-btn { white-space: nowrap; }
.defs { position: absolute; }

.tabstrip { display: flex; align-items: center; height: 40px; background: #c9e8be; padding-left: 6px; }
.tab-search { width: 28px; height: 28px; border-radius: 10px; background: #fff; display: grid; place-items: center; margin-right: 4px; }
.tabs { display: flex; }
.tab { width: 43px; height: 16px; padding-left: 10px; border-right: 2px solid #fff; }
.tab svg { width: 16px; height: 16px; }
.tabs-after .tab { width: 42px; padding-left: 10px; }
.tab-active { align-self: flex-end; width: 36px; height: 34px; margin: 0 4px 0 0; border-radius: 10px 10px 0 0; background: #fff; display: grid; place-items: center; padding: 0 0 6px 4px; position: relative; }
.tabs:not(.tabs-after) .tab:last-child { border-right-color: transparent; width: 45px; }
.tab-active::before, .tab-active::after { content: ""; position: absolute; bottom: 0; width: 10px; height: 10px; }
.tab-active::before { left: -10px; background: radial-gradient(circle at 0 0, transparent 9.500px, #fff 10px); }
.tab-active::after { right: -10px; background: radial-gradient(circle at 100% 0, transparent 9.500px, #fff 10px); }
.new-tab { margin-left: 10px; }
.win-controls { display: flex; gap: 34px; margin-left: auto; padding-right: 17px; }
.win-controls svg { width: 12px; height: 12px; }

.toolbar { display: flex; align-items: center; height: 46px; background: #fff; }
.nav-btns { display: flex; gap: 20px; padding-left: 14px; width: 120px; }
.nav-btns svg { width: 16px; height: 16px; }
.omnibox { display: flex; align-items: center; width: 763px; height: 34px; border-radius: 17px; background: #e1e1e1; padding: 0 16px 0 5px; }
.site-info { width: 24px; height: 24px; border-radius: 50%; background: #fff; display: grid; place-items: center; margin-right: 8px; }
.url { font-size: 14px; letter-spacing: -.29px; color: #666; padding-bottom: 1px; }
.url b { font-weight: 400; color: #1f1f1f; }
.star { margin-left: auto; }
.extensions { display: flex; align-items: center; gap: 20px; margin-left: 18px; }
.extensions svg { width: 16px; height: 16px; }
.extensions .puzzle { width: 18px; height: 18px; margin: -1px 0 0 -1px; }
.divider { width: 2px; height: 16px; background: #c9e8be; margin: 0 18px 0 17px; }
.avatar { width: 20px; height: 20px; border-radius: 50%; background: #455a64; color: #fff; font: 11px/20px Roboto, sans-serif; text-align: center; margin: 0 12px 0 18px; }
.update { display: flex; align-items: center; justify-content: space-between; width: 159px; height: 34px; border-radius: 17px; background: #c9e8be; padding: 0 14px 0 12px; font-size: 12px; letter-spacing: -.35px; }

.bookmarks { display: flex; align-items: center; height: 34px; padding: 0 30px 6px 12px; background: #fff; font-size: 12px; }
.bm { display: flex; align-items: center; gap: 6px; letter-spacing: -.24px; }
.bm span { padding-bottom: 1px; }
.bm.tight { letter-spacing: -.38px; }
.bm svg { width: 16px; height: 16px; }
.w118 { width: 118px; } .w148 { width: 148px; } .w150 { width: 150px; } .w151 { width: 151px; } .w152 { width: 152px; } .w153 { width: 153px; }
.w148.tight { letter-spacing: -.25px; }
.more { margin-left: auto; }

.vm-head { display: flex; justify-content: space-between; height: 62px; background: #fafafa; border: solid #ccc; border-width: 1px 0; padding: 0 10px; font-family: Inter, sans-serif; color: #565656; }
.vm-left h3 { font-size: 16px; font-weight: 500; line-height: 24px; color: #565656; letter-spacing: -.1px; }
.vm-left p, .vm-right p { font-size: 11px; line-height: 14px; margin-top: 15px; color: #737373; letter-spacing: .08px; }
.vm-left p { letter-spacing: .15px; }
.vm-actions { display: flex; gap: 10px; padding: 5px 5px 0 0; height: 34px; }
.vm-right p { margin-top: 5px; text-align: right; }
.select { width: 119px; height: 29px; border: 1px solid #aaa; border-radius: 3px; background: #fff; display: flex; align-items: center; justify-content: flex-end; gap: 27px; padding-right: 4px; font: 12px "Liberation Sans", sans-serif; color: #222; }
.select span { margin-right: 4px; }
.vm-btn { height: 23px; border: 1px solid #0079b8; border-radius: 3px; color: #0079b8; font-size: 11px; line-height: 22px; text-align: center; letter-spacing: .95px; }
.b1 { width: 157px; } .b2 { width: 111px; } .b3 { width: 163px; }

.guest { position: relative; height: 546px; background: #f9f9f9; overflow: hidden; }
.gnome-bar { display: flex; align-items: center; height: 32px; border-top: 5px solid #000; background: #131313; color: #f2f2f2; font-size: 15px; padding: 0 17px 0 18px; letter-spacing: -.4px; }
.gnome-bar span { padding-bottom: 2px; }
.g-act { width: 99px; letter-spacing: .02px; }
.g-app { margin-left: 6px; width: 536px; }
.g-tray { display: flex; gap: 12px; margin-left: auto; padding-bottom: 2px; }
.g-tray svg { width: 16px; height: 16px; }

.ff-tabs { display: flex; align-items: center; height: 44px; background: #ebebeb; padding: 0 7px 0 11px; }
.ff-view { margin-right: 17px; }
.ff-tab { display: flex; align-items: center; justify-content: space-between; width: 222px; height: 36px; border-radius: 4px; background: #fbfbfb; box-shadow: 0 0 3px rgba(0,0,0,.45); padding: 0 11px 0 9px; font-size: 14px; letter-spacing: .33px; color: #333; }
.ff-plus { margin-left: 16px; }
.ff-chev { margin-left: auto; margin-right: 56px; }
.ff-win { display: flex; gap: 12px; }
.ff-win span { width: 22px; height: 22px; border-radius: 50%; background: #dadada; display: grid; place-items: center; }
.ff-win svg { width: 10px; height: 10px; }
.ff-nav { display: flex; align-items: center; height: 41px; background: #fbfbfb; border-bottom: 1px solid #ccc; padding-left: 16px; }
.ff-arrow.fwd { margin-left: 20px; }
.ff-reload { margin-left: 20px; }
.ff-url { display: flex; align-items: center; width: 880px; height: 32px; border-radius: 4px; background: #eee; margin-left: 121px; padding: 0 8px; font-size: 15px; letter-spacing: .05px; color: #888; }
.ff-url svg + svg { margin: 0 9px 0 11px; }
.ff-url b { font-weight: 400; color: #222; }
.ff-star { margin-left: auto; }
.ff-tools { display: flex; gap: 20px; margin-left: 121px; }
.ff-tools svg { width: 16px; height: 16px; }

.page { display: flex; flex-direction: column; align-items: center; font-family: "Liberation Sans", sans-serif; text-align: center; }
.page h1 { font-size: 32px; line-height: 36px; margin-top: 21px; color: #ff4500; }
.page h2 { font-size: 24px; line-height: 28px; margin-top: 22px; color: #ff4500; }
.time { font-size: 16px; line-height: 18px; margin-top: 21px; color: #00bfff; letter-spacing: .015px; }
.card { width: 340px; height: 320px; flex: none; margin-top: 20px; padding: 20px; background: #ffffe0; border-radius: 5px; box-shadow: 0 0 10px rgba(0,0,0,.1); text-align: left; color: #333; }
.card label { display: block; font-size: 16px; line-height: 19px; }
.field { height: 38px; margin-bottom: 10px; border: 1px solid #ff6347; border-radius: 5px; background: #fff; }
.focused { position: relative; display: flex; align-items: center; padding-left: 10px; border-color: #e95420; box-shadow: 0 0 0 1.500px #e95420; font: 13px "Open Sans", sans-serif; color: #000; }
.focused i { width: 1px; height: 16px; background: #000; }
.hint { position: absolute; left: -1px; top: 36px; width: 246px; height: 56px; border: 1px solid #bbb; border-radius: 7px; background: #fff; box-shadow: 0 1px 3px rgba(0,0,0,.25); display: grid; place-items: center; padding-bottom: 3px; font-size: 14px; letter-spacing: .06px; z-index: 1; }
.save { height: 36px; border-radius: 5px; background: #4caf50; color: #fff; font: 13px/37px "Open Sans", sans-serif; letter-spacing: -.05px; text-align: center; }

.dock { position: absolute; left: 0; top: 32px; width: 70px; height: 514px; background: rgba(35,35,35,.81); padding-top: 5px; }
.launch { position: relative; width: 64px; height: 64px; margin: 0 3px 4px; display: grid; place-items: center; }
.sel { margin-top: 1px; border-radius: 14px; background: rgba(255,255,255,.17); }
.sel svg { margin-top: -1px; }
.bird svg { margin: 1px 0 0 1px; }
.on::before { content: ""; position: absolute; left: 0; top: 29px; width: 6px; height: 6px; border-radius: 50%; background: #e95420; }
.store svg { margin-top: -3px; }
.cut { height: 28px; margin-bottom: 19px; place-items: end center; }
.apps { display: grid; grid-template-columns: repeat(3, 6px); gap: 6px; width: 30px; margin: 0 auto; }
.apps i { width: 6px; height: 6px; border-radius: 1.500px; background: #f2f2f2; }

.taskbar { display: flex; height: 40px; background: #1f1f1f; color: #fff; }
.start { width: 48px; display: grid; place-items: center; }
.search { width: 288px; background: #f2f2f2; border: 1px solid #bbb; display: flex; align-items: center; padding: 0 7px 0 11px; color: #333; font-size: 15px; letter-spacing: -.5px; }
.search span { margin-left: 10px; }
.rocket { margin-left: auto; }
.task { position: relative; width: 40px; margin-right: 9px; display: grid; place-items: center; }
.search + .task { margin: 0 11px 0 4px; }
.run { box-shadow: inset 0 -2px #76b9ed; }
.stacked { box-shadow: none; background: linear-gradient(90deg, #76b9ed 31px, #4e84ad 31px) bottom / 100% 2px no-repeat; }
.task .badge { position: absolute; left: 18px; top: 19px; width: 16px; height: 16px; border-radius: 50%; font: 10px/16px Roboto, sans-serif; text-align: center; }
.slate { background: #455a64; } .violet { background: #7b1fa2; }
.tray { display: flex; align-items: center; margin-left: auto; font-size: 12px; width: 339px; border-right: 1px solid #777; margin-right: 4px; }
.moon { margin-left: 4px; margin-right: 9px; }
.temp { width: 36px; font-size: 13px; letter-spacing: -.1px; }
.cond { width: 55px; font-size: 13px; letter-spacing: 0; }
.mute { margin-left: 9px; } .batt { margin-left: 8px; }
.lang { margin-left: 9px; letter-spacing: -.5px; width: 24px; }
.clock { display: grid; width: 70px; text-align: center; line-height: 18px; letter-spacing: -.4px; margin-left: 1px; }
.notif { position: relative; margin-left: 15px; }
.notif b { position: absolute; left: 6px; top: 6px; width: 17px; height: 17px; border: 1px solid #999; border-radius: 50%; background: #333; font: 11px/15px "Open Sans", sans-serif; text-align: center; }
```
